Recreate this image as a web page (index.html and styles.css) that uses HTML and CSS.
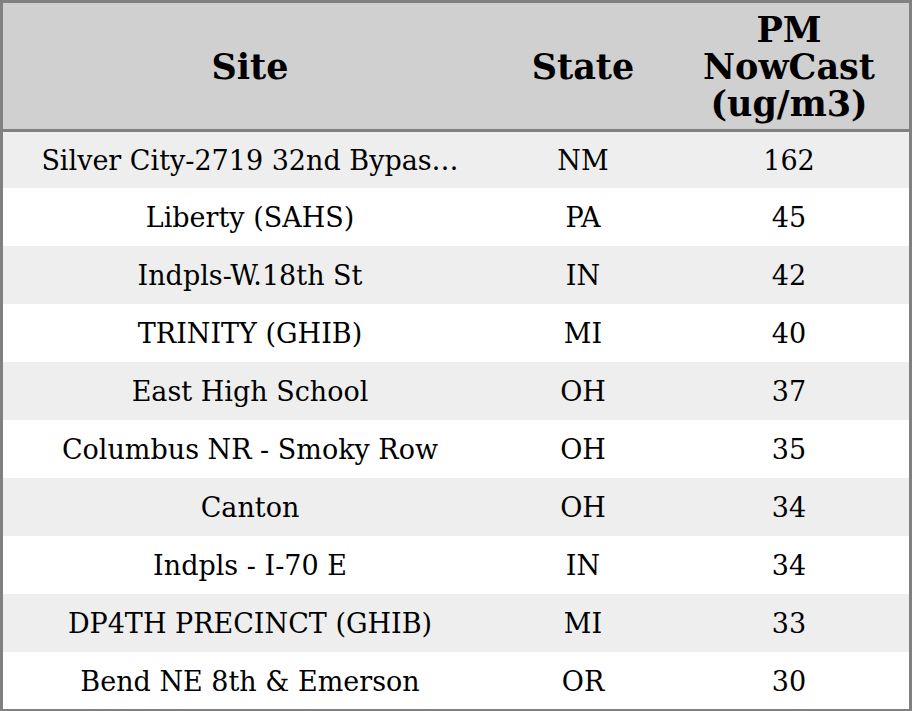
FILE: index.html
```html
<!DOCTYPE html>
<html>
<head>
<meta charset="utf-8">
<link rel="stylesheet" href="styles.css">
</head>
<body>
<table class="grid">
  <colgroup>
    <col class="c-site">
    <col class="c-state">
    <col class="c-pm">
  </colgroup>
  <thead>
    <tr><th>Site</th><th>State</th><th>PM<br>NowCast<br>(ug/m3)</th></tr>
  </thead>
  <tbody>
    <tr><td>Silver City-2719 32nd Bypas…</td><td>NM</td><td>162</td></tr>
    <tr><td>Liberty (SAHS)</td><td>PA</td><td>45</td></tr>
    <tr><td>Indpls-W.18th St</td><td>IN</td><td>42</td></tr>
    <tr><td>TRINITY (GHIB)</td><td>MI</td><td>40</td></tr>
    <tr><td>East High School</td><td>OH</td><td>37</td></tr>
    <tr><td>Columbus NR - Smoky Row</td><td>OH</td><td>35</td></tr>
    <tr><td>Canton</td><td>OH</td><td>34</td></tr>
    <tr><td>Indpls - I-70 E</td><td>IN</td><td>34</td></tr>
    <tr><td>DP4TH PRECINCT (GHIB)</td><td>MI</td><td>33</td></tr>
    <tr><td>Bend NE 8th &amp; Emerson</td><td>OR</td><td>30</td></tr>
  </tbody>
</table>
</body>
</html>
```
FILE: styles.css
```css
html, body {
  margin: 0;
  padding: 0;
  background: #ffffff;
}
.grid {
  width: 912px;
  border: 3px solid #808080;
  border-collapse: separate;
  border-spacing: 0;
  table-layout: fixed;
  font-family: "DejaVu Serif", serif;
  color: #000;
}
.c-site { width: 494px; }
.c-state { width: 172px; }
.c-pm { width: 240px; }
.grid th {
  background: #d0d0d0;
  font-weight: bold;
  font-size: 35px;
  line-height: 37.3px;
  height: 125px;
  padding: 1px 0 0;
  text-align: center;
  vertical-align: middle;
  border-bottom: 3px solid #808080;
}
.grid td {
  font-size: 27px;
  line-height: 30px;
  padding: 15px 0 13px;
  text-align: center;
  vertical-align: middle;
  white-space: nowrap;
}
.grid tbody tr:first-child td {
  padding: 14px 0 12px;
}
.grid tbody tr:last-child td {
  padding: 15px 0 12px;
}
.grid tbody tr:nth-child(odd) td {
  background: #eeeeee;
}
```
